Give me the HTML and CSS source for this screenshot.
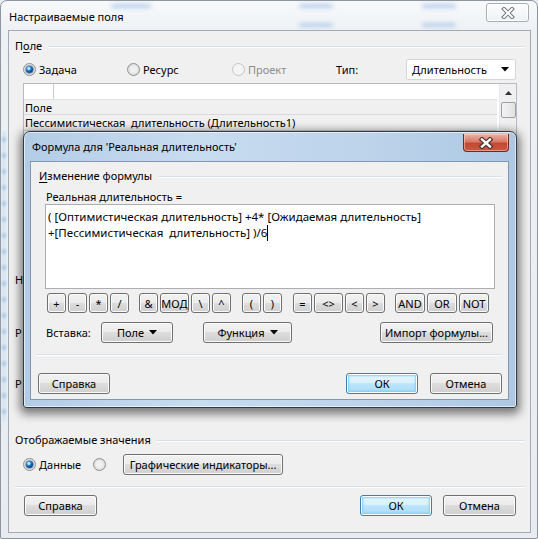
FILE: index.html
```html
<!DOCTYPE html>
<html lang="ru">
<head>
<meta charset="utf-8">
<title>Настраиваемые поля</title>
<link rel="stylesheet" href="styles.css">
</head>
<body>
<div class="window">
  <div class="bg-blur">
    <span class="blob b1"></span><span class="blob b2"></span><span class="blob b3"></span><span class="blob b4"></span><span class="blob b5"></span>
  </div>
  <div class="side-dash"></div>
  <div class="titlebar">
    <span class="title">Настраиваемые поля</span>
    <span class="cap-close inactive">
      <svg width="14" height="12" viewBox="0 0 14 12"><path d="M3 2 L11 10 M11 2 L3 10" stroke="#6f7378" stroke-width="4" stroke-linecap="square"/><path d="M3 2 L11 10 M11 2 L3 10" stroke="#ffffff" stroke-width="2" stroke-linecap="square"/></svg>
    </span>
  </div>
  <div class="client">
    <div class="group-head first"><span>П<u>о</u>ле</span><i class="gline"></i></div>
    <div class="radio-row">
      <label class="opt w104"><span class="radio on"></span>Задача</label>
      <label class="opt w105"><span class="radio"></span>Ресурс</label>
      <label class="opt w104 disabled"><span class="radio dis"></span>Проект</label>
      <label class="opt w70">Тип:</label>
      <div class="combo"><span>Длительность</span><svg width="8" height="5" viewBox="0 0 8 5"><path d="M0 0 H8 L4 4.5 Z" fill="#000"/></svg></div>
    </div>
    <div class="listbox">
      <div class="lb-main">
        <div class="lb-top"><span class="lb-cell"></span></div>
        <div class="lb-row head">Поле</div>
        <div class="lb-row">Пессимистическая&nbsp; длительность (Длительность1)</div>
      </div>
      <div class="vscroll">
        <svg width="7" height="4" viewBox="0 0 7 4" class="up"><path d="M0 4 H7 L3.5 0 Z" fill="#333"/></svg>
        <span class="thumb"></span>
      </div>
    </div>
    <div class="hidden-label l1">Н</div>
    <div class="hidden-label l2">Р</div>
    <div class="hidden-label l3">Р</div>

    <div class="group-head second"><span>Отображаемые значения</span><i class="gline"></i></div>
    <div class="radio-row2">
      <label class="opt w70"><span class="radio on"></span>Данные</label>
      <span class="radio solo"></span>
      <button class="btn w160">Графические индикаторы...</button>
    </div>
    <div class="sep outer-sep"></div>
    <div class="btn-row outer-btns">
      <button class="btn w73">Справка</button>
      <span class="spacer"></span>
      <button class="btn w72 default">ОК</button>
      <button class="btn w73">Отмена</button>
    </div>
  </div>

  <div class="dialog">
    <div class="dlg-title">
      <span class="title">Формула для 'Реальная длительность'</span>
      <span class="cap-close active">
        <svg width="16" height="12" viewBox="0 0 16 12"><path d="M4 2.5 L12 9.5 M12 2.5 L4 9.5" stroke="#4a2a26" stroke-width="4.6" stroke-linecap="square"/><path d="M4 2.5 L12 9.5 M12 2.5 L4 9.5" stroke="#ffffff" stroke-width="2.4" stroke-linecap="square"/></svg>
      </span>
    </div>
    <div class="dlg-client">
      <div class="group-head dlg-head"><span><u>И</u>зменение формулы</span><i class="gline"></i></div>
      <div class="formula-label">Реальная длительность =</div>
      <div class="formula-box">( [Оптимистическая длительность] +4* [Ожидаемая длительность]<br>+[Пессимистическая&nbsp; длительность] )/6<span class="caret"></span></div>
      <div class="ops">
        <div class="op-group">
          <button class="btn op">+</button><button class="btn op">-</button><button class="btn op">*</button><button class="btn op">/</button>
        </div>
        <div class="op-group">
          <button class="btn op">&amp;</button><button class="btn op wide">МОД</button><button class="btn op">\</button><button class="btn op">^</button>
        </div>
        <div class="op-group">
          <button class="btn op">(</button><button class="btn op">)</button>
        </div>
        <div class="op-group">
          <button class="btn op">=</button><button class="btn op wide">&lt;&gt;</button><button class="btn op">&lt;</button><button class="btn op">&gt;</button>
        </div>
        <div class="op-group">
          <button class="btn op wide3">AND</button><button class="btn op wide3">OR</button><button class="btn op wide3">NOT</button>
        </div>
      </div>
      <div class="insert-row">
        <span class="ins-label">Вставка:</span>
        <button class="btn w72 menu">Поле <svg width="8" height="5" viewBox="0 0 8 5"><path d="M0 0 H8 L4 4.5 Z" fill="#000"/></svg></button>
        <button class="btn w89 menu">Функция <svg width="8" height="5" viewBox="0 0 8 5"><path d="M0 0 H8 L4 4.5 Z" fill="#000"/></svg></button>
        <span class="spacer"></span>
        <button class="btn w113">Импорт формулы...</button>
      </div>
      <div class="sep dlg-sep"></div>
      <div class="btn-row dlg-btns">
        <button class="btn w72">Справка</button>
        <span class="spacer"></span>
        <button class="btn w72 default">ОК</button>
        <button class="btn w72">Отмена</button>
      </div>
    </div>
  </div>
</div>
</body>
</html>
```

FILE: styles.css
```css
* { box-sizing: border-box; }
html, body { margin: 0; padding: 0; }
body {
  width: 538px; height: 539px; overflow: hidden;
  background: #e6ebf0;
  font-family: "Noto Sans", "Open Sans", sans-serif;
  font-size: 11px; color: #000;
}
u { text-decoration: underline; text-underline-offset: 2px; }

.window {
  position: relative;
  width: 538px; height: 539px;
  border: 1px solid #8d959e;
  border-radius: 7px 7px 2px 2px;
  padding: 0 6px 5px 7px;
  background: linear-gradient(#f7f9fb, #eef1f4 30px, #e8ecf0);
  display: flex; flex-direction: column;
}
.bg-blur { position: absolute; left: 0; top: 0; width: 100%; height: 30px; overflow: hidden; pointer-events: none; }
.blob { position: absolute; height: 4px; background: #9ec0e6; filter: blur(2px); opacity: .7; border-radius: 3px; }
.b1 { left: 110px; top: 3px; width: 40px; }
.b2 { left: 298px; top: 3px; width: 34px; }
.b3 { left: 421px; top: 3px; width: 34px; }
.b4 { left: 298px; top: 22px; width: 34px; }
.b5 { left: 421px; top: 22px; width: 34px; }
.side-dash {
  position: absolute; left: 1px; top: 130px; width: 4px; height: 290px;
  background: repeating-linear-gradient(#d3e2f2 0 6px, #9fc0e2 6px 11px, #d3e2f2 11px 16px);
  filter: blur(1px); opacity: .8;
}

.titlebar {
  height: 29px; display: flex; align-items: center; position: relative;
  padding-right: 2px;
}
.title { flex: 1; padding-left: 1px; white-space: nowrap; }
.titlebar .title { margin-top: 2px; font-size: 11px; }
.cap-close {
  display: flex; align-items: center; justify-content: center;
  align-self: flex-start;
}
.cap-close.inactive {
  width: 43px; height: 19px; margin-top: 2px;
  border: 1px solid #a7adb4; border-radius: 3px;
  background: linear-gradient(#fbfcfd, #eef1f4);
  box-shadow: inset 0 0 0 1px #ffffff;
}

.client {
  flex: 1; position: relative;
  border: 1px solid #a2abb5;
  background: #f0f0f0;
  padding: 0 5px 0 6px;
  display: flex; flex-direction: column;
}

.group-head { display: flex; align-items: center; height: 14px; line-height: 14px; white-space: nowrap; }
.group-head .gline { flex: 1; margin-left: 6px; height: 2px; border-top: 1px solid #d5dfe5; border-bottom: 1px solid #ffffff; margin-top: 1px; }
.group-head.first { margin-top: 8px; }

.radio-row { display: flex; align-items: center; height: 21px; margin-top: 6px; padding-left: 8px; }
.opt { display: inline-flex; align-items: center; white-space: nowrap; }
.w104 { width: 104px; } .w105 { width: 105px; } .w70 { width: 70px; }
.opt.disabled { color: #8d8d8d; }
.radio {
  width: 13px; height: 13px; border-radius: 50%; margin-right: 3px; flex: none;
  border: 1px solid #8e8f8f;
  background: radial-gradient(circle at 50% 50%, #f0f0f0 0 3px, #dedede 5px, #e9e9e9 6px);
  position: relative;
}
.radio.on::after {
  content: ""; position: absolute; left: 2px; top: 2px; width: 7px; height: 7px; border-radius: 50%;
  background: radial-gradient(circle at 40% 35%, #bfe7ff 0 1px, #2d8ae0 2px, #0c4f96 3.5px);
  box-shadow: 0 0 0 .5px #1e5b94;
}
.radio.dis { border-color: #c5c5c5; background: #f4f4f4; }
.combo {
  width: 110px; height: 21px; margin-left: 0;
  border: 1px solid #d6d6d6; border-radius: 2px;
  background: #ffffff;
  display: flex; align-items: center; justify-content: space-between;
  padding: 0 6px 0 5px;
}

.listbox {
  margin-top: 3px; margin-left: 8px; width: 494px; height: 80px;
  border: 1px solid #b7bcc2; background: #ffffff; display: flex;
}
.lb-main { flex: 1; display: flex; flex-direction: column; padding-right: 2px; }
.lb-top { height: 15px; background: #ffffff; display: flex; }
.lb-cell { width: 30px; border-right: 1px solid #c9c9c9; height: 100%; }
.lb-row { height: 16px; line-height: 16px; background: #f0f0f0; border-bottom: 1px solid #d9d9d9; padding-left: 1px; white-space: nowrap; }
.lb-row.head { border-top: 1px solid #e2e2e2; }
.vscroll { width: 17px; position: relative; background: #f0f0f0; border-left: 1px solid #e8e8e8; }
.vscroll .up { position: absolute; left: 5px; top: 7px; }
.vscroll .thumb { position: absolute; left: 1px; top: 18px; width: 15px; height: 16px; border: 1px solid #9aa0a6; border-radius: 2px; background: linear-gradient(90deg, #f3f3f3, #e2e2e2); }

.hidden-label { height: 15px; line-height: 15px; white-space: nowrap; }
.hidden-label.l1 { margin-top: 109px; }
.hidden-label.l2 { margin-top: 38px; }
.hidden-label.l3 { margin-top: 36px; }

.group-head.second { margin-top: 42px; }
.radio-row2 { display: flex; align-items: center; height: 21px; margin-top: 7px; padding-left: 8px; }
.radio.solo { margin-right: 0; }
.radio-row2 .btn { margin-left: 17px; }

.sep { height: 2px; border-top: 1px solid #d5dfe5; border-bottom: 1px solid #ffffff; }
.outer-sep { margin-top: 11px; }

.btn-row { display: flex; align-items: center; }
.spacer { flex: 1; }
.outer-btns { margin-top: 7px; padding-left: 9px; padding-right: 9px; }
.outer-btns .btn + .btn { margin-left: 11px; }

.btn {
  font: inherit; color: #000;
  height: 21px; padding: 0; margin: 0;
  border: 1px solid #707070; border-radius: 3px;
  background: linear-gradient(#f2f2f2 0%, #ebebeb 49%, #dddddd 50%, #cfcfcf 100%);
  box-shadow: inset 0 0 0 1px #fbfbfb;
  display: inline-flex; align-items: center; justify-content: center;
  white-space: nowrap;
}
.btn.default {
  border-color: #3c7fb1;
  background: linear-gradient(#eaf6fd 0%, #d9f0fc 49%, #bee6fd 50%, #a7d9f5 100%);
  box-shadow: inset 0 0 0 1px #ffffff, inset 0 0 2px 2px #7ed0f5;
}
.w72 { width: 72px; } .w73 { width: 73px; } .w89 { width: 89px; } .w113 { width: 113px; } .w160 { width: 160px; }
.btn.menu svg { margin-left: 5px; }

.dialog {
  position: absolute; left: 22px; top: 130px;
  width: 494px; height: 277px;
  border: 1px solid #2e3a46;
  border-radius: 7px 7px 3px 3px;
  background: linear-gradient(90deg, #b3cce6 0%, #c8dcf0 35%, #bcd3ea 70%, #aec8e3 100%);
  box-shadow: 0 3px 10px 3px rgba(0,0,0,.5), inset 0 0 0 1px rgba(255,255,255,.6);
  padding: 0 7px 7px 6px;
  display: flex; flex-direction: column;
}
.dlg-title { height: 29px; display: flex; align-items: flex-start; }
.dlg-title .title { padding-left: 2px; line-height: 14px; margin-top: 8px; font-size: 11px; }
.cap-close.active {
  width: 46px; height: 18px; margin-top: 2px;
  border: 1px solid #6b2a22; border-top: none;
  border-radius: 0 0 4px 4px;
  background: linear-gradient(#eab3a7 0%, #d97a68 45%, #c24a35 55%, #c8583f 100%);
  box-shadow: inset 0 0 0 1px rgba(255,220,210,.5);
}
.dlg-client {
  flex: 1; border: 1px solid #8497ab; background: #f0f0f0;
  padding: 0 6px 0 6px;
  display: flex; flex-direction: column;
}
.dlg-head { margin-top: 7px; padding-left: 2px; }
.formula-label { margin-top: 7px; padding-left: 9px; height: 14px; line-height: 14px; }
.formula-box {
  margin-left: 8px; width: 450px; height: 85px;
  border: 1px solid #abadb3; background: #ffffff;
  padding: 4px 2px; line-height: 16px; white-space: nowrap; font-size: 11.5px;
}
.caret { display: inline-block; width: 1px; height: 16px; background: #000; vertical-align: -4px; }
.ops { display: flex; margin-top: 4px; padding-left: 10px; height: 20px; }
.op-group { display: flex; gap: 2px; margin-right: 10px; }
.op-group:nth-child(2), .op-group:nth-child(3) { margin-right: 11px; }
.btn.op { width: 19px; height: 20px; }
.btn.op.wide { width: 29px; }
.btn.op.wide3 { width: 30px; }
.insert-row { display: flex; align-items: center; height: 21px; margin-top: 9px; padding-left: 9px; padding-right: 9px; }
.ins-label { width: 55px; }
.insert-row .w89 { margin-left: 30px; }
.dlg-sep { margin-top: 11px; }
.dlg-btns { margin-top: 17px; padding-left: 1px; }
.dlg-btns .btn + .btn { margin-left: 12px; }
```
